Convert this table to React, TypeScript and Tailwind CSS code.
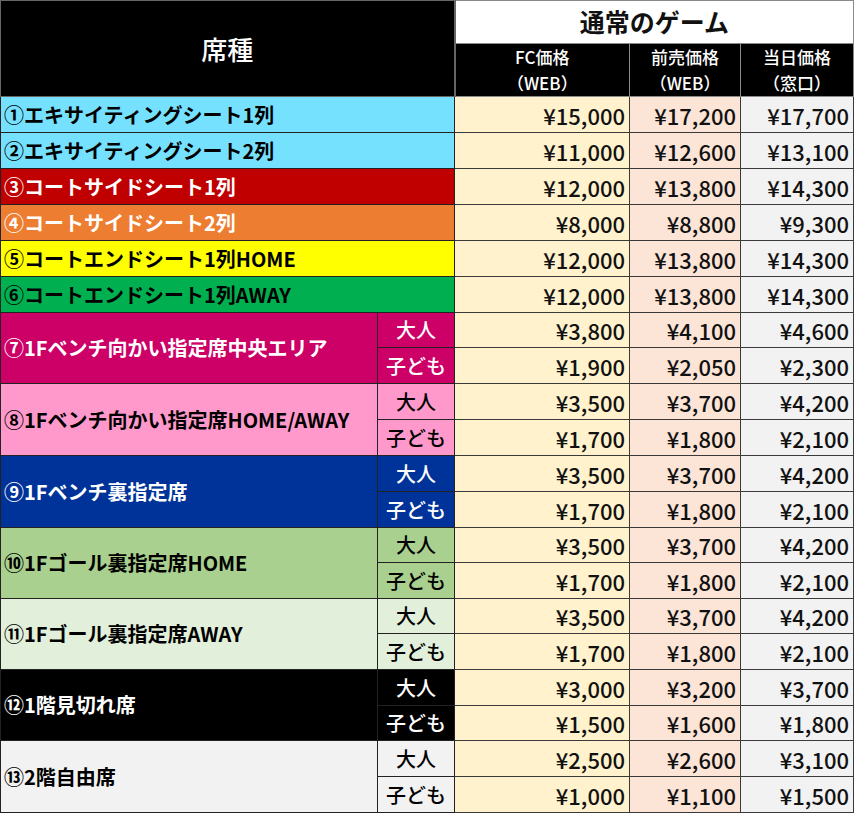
import React from 'react';

type Seat = {
  label: string;
  bg: string;
  text: string;
  prices: string[][];
  heights: number[];
};

const font = { fontFamily: '"Noto Sans CJK JP", "Noto Sans", sans-serif' };

const seats: Seat[] = [
  { label: '①エキサイティングシート1列', bg: 'bg-[#75e1ff]', text: 'text-black', prices: [['¥15,000', '¥17,200', '¥17,700']], heights: [36] },
  { label: '②エキサイティングシート2列', bg: 'bg-[#75e1ff]', text: 'text-black', prices: [['¥11,000', '¥12,600', '¥13,100']], heights: [36] },
  { label: '③コートサイドシート1列', bg: 'bg-[#c00000]', text: 'text-white', prices: [['¥12,000', '¥13,800', '¥14,300']], heights: [36] },
  { label: '④コートサイドシート2列', bg: 'bg-[#ed7d31]', text: 'text-white', prices: [['¥8,000', '¥8,800', '¥9,300']], heights: [36] },
  { label: '⑤コートエンドシート1列HOME', bg: 'bg-[#ffff00]', text: 'text-black', prices: [['¥12,000', '¥13,800', '¥14,300']], heights: [36] },
  { label: '⑥コートエンドシート1列AWAY', bg: 'bg-[#00b050]', text: 'text-black', prices: [['¥12,000', '¥13,800', '¥14,300']], heights: [36] },
  { label: '⑦1Fベンチ向かい指定席中央エリア', bg: 'bg-[#cc0066]', text: 'text-white', prices: [['¥3,800', '¥4,100', '¥4,600'], ['¥1,900', '¥2,050', '¥2,300']], heights: [35, 36] },
  { label: '⑧1Fベンチ向かい指定席HOME/AWAY', bg: 'bg-[#ff99cc]', text: 'text-black', prices: [['¥3,500', '¥3,700', '¥4,200'], ['¥1,700', '¥1,800', '¥2,100']], heights: [36, 36] },
  { label: '⑨1Fベンチ裏指定席', bg: 'bg-[#003399]', text: 'text-white', prices: [['¥3,500', '¥3,700', '¥4,200'], ['¥1,700', '¥1,800', '¥2,100']], heights: [36, 36] },
  { label: '⑩1Fゴール裏指定席HOME', bg: 'bg-[#a9d08e]', text: 'text-black', prices: [['¥3,500', '¥3,700', '¥4,200'], ['¥1,700', '¥1,800', '¥2,100']], heights: [35, 36] },
  { label: '⑪1Fゴール裏指定席AWAY', bg: 'bg-[#e2efda]', text: 'text-black', prices: [['¥3,500', '¥3,700', '¥4,200'], ['¥1,700', '¥1,800', '¥2,100']], heights: [35, 36] },
  { label: '⑫1階見切れ席', bg: 'bg-black', text: 'text-white', prices: [['¥3,000', '¥3,200', '¥3,700'], ['¥1,500', '¥1,600', '¥1,800']], heights: [36, 35] },
  { label: '⑬2階自由席', bg: 'bg-[#f2f2f2]', text: 'text-black', prices: [['¥2,500', '¥2,600', '¥3,100'], ['¥1,000', '¥1,100', '¥1,500']], heights: [36, 36] },
];

const priceBg = ['bg-[#fff2cc]', 'bg-[#fce4d6]', 'bg-[#f2f2f2]'];
const ageLabels = ['大人', '子ども'];

function PriceCells({ row }: { row: string[] }) {
  return (
    <>
      {row.map((p, i) => (
        <td
          key={i}
          className={`${priceBg[i]} border border-[#3a3a3a] text-right pr-[4px] text-[22px] font-medium leading-none text-[#111]`}
        >
          {p}
        </td>
      ))}
    </>
  );
}

export default function App() {
  return (
    <div className="bg-white w-[854px] h-[814px]" style={font}>
      <table className="table-fixed border-collapse border border-[#8a8a8a] w-[853px]">
        <colgroup>
          <col className="w-[377px]" />
          <col className="w-[77px]" />
          <col className="w-[175px]" />
          <col className="w-[111px]" />
          <col className="w-[113px]" />
        </colgroup>
        <thead>
          <tr className="h-[43px]">
            <th
              rowSpan={2}
              colSpan={2}
              className="bg-black text-white text-[26px] font-medium border border-r-2 border-[#666] text-center"
            >
              席種
            </th>
            <th colSpan={3} className="bg-white text-[#111] text-[25px] font-bold border border-[#8a8a8a] text-center">
              通常のゲーム
            </th>
          </tr>
          <tr className="h-[52px]">
            {[
              ['FC価格', '（WEB）'],
              ['前売価格', '（WEB）'],
              ['当日価格', '（窓口）'],
            ].map(([a, b]) => (
              <th
                key={a}
                className="bg-black text-white text-[17px] font-medium leading-[26px] border border-[#8a8a8a] text-center"
              >
                <div>{a}</div>
                <div>{b}</div>
              </th>
            ))}
          </tr>
        </thead>
        <tbody>
          {seats.map((s) =>
            s.prices.length === 1 ? (
              <tr key={s.label} style={{ height: s.heights[0] }}>
                <td
                  colSpan={2}
                  className={`${s.bg} ${s.text} border border-[#222] pl-[3px] text-[20px] font-bold leading-none whitespace-nowrap`}
                >
                  {s.label}
                </td>
                <PriceCells row={s.prices[0]} />
              </tr>
            ) : (
              <React.Fragment key={s.label}>
                <tr style={{ height: s.heights[0] }}>
                  <td
                    rowSpan={2}
                    className={`${s.bg} ${s.text} border border-[#222] pl-[3px] text-[20px] font-bold leading-none whitespace-nowrap`}
                  >
                    {s.label}
                  </td>
                  <td className={`${s.bg} ${s.text} border border-[#222] text-center text-[20px] font-medium leading-none`}>
                    {ageLabels[0]}
                  </td>
                  <PriceCells row={s.prices[0]} />
                </tr>
                <tr style={{ height: s.heights[1] }}>
                  <td className={`${s.bg} ${s.text} border border-[#222] text-center text-[20px] font-medium leading-none`}>
                    {ageLabels[1]}
                  </td>
                  <PriceCells row={s.prices[1]} />
                </tr>
              </React.Fragment>
            )
          )}
        </tbody>
      </table>
    </div>
  );
}
